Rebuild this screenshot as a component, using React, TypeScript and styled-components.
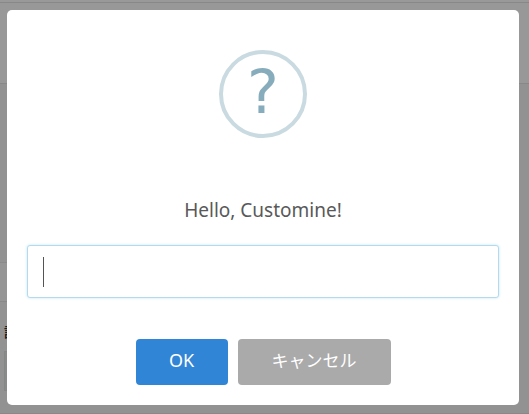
import React, { useState } from "react";
import styled, { createGlobalStyle } from "styled-components";

const GlobalStyle = createGlobalStyle`
  * { box-sizing: border-box; }
  html, body, #root { height: 100%; }
  body {
    margin: 0;
    overflow: hidden;
    background: #f3f3f3;
    font-family: "Noto Sans", "Noto Sans CJK JP", sans-serif;
  }
`;

const Page = styled.div`
  display: flex;
  flex-direction: column;
  min-height: 100%;
`;

const TopBar = styled.div`
  height: 3px;
  background: #ffffff;
  border-bottom: 1px solid #e3e3e3;
`;

const Header = styled.div`
  height: 81px;
  background: #fdfdfd;
  border-bottom: 1px solid #e3e3e3;
`;

const Spacer = styled.div`
  height: 178px;
`;

const Toolbar = styled.div`
  width: 80%;
  height: 40px;
  background: #f9f9f9;
  border-top: 1px solid #e6e6e6;
  border-bottom: 1px solid #e3e3e3;
`;

const Record = styled.div`
  display: flex;
  flex-direction: column;
  flex: 1;
  padding: 20px 4px 0;
  border-bottom: 1px solid #e3e3e3;
`;

const FieldLabel = styled.div`
  height: 29px;
  font-size: 13px;
  line-height: 20px;
  font-weight: 700;
  color: #333333;
`;

const FieldValue = styled.div`
  width: 160px;
  height: 40px;
  background: #e4e7e7;
  border: 1px solid #dedfdf;
`;

const Overlay = styled.div`
  position: fixed;
  inset: 0;
  display: flex;
  align-items: center;
  padding: 10px 10px 9px 7px;
  background: rgba(0, 0, 0, 0.4);
`;

const Dialog = styled.form`
  display: flex;
  flex-direction: column;
  align-items: center;
  width: 100%;
  padding: 40px 20px 20px;
  border-radius: 5px;
  background: #ffffff;
`;

const QuestionIcon = styled.div`
  display: flex;
  justify-content: center;
  width: 88px;
  height: 88px;
  border: 4px solid #c9dae1;
  border-radius: 50%;
  color: #87adbd;
  font-family: "DejaVu Sans", sans-serif;
  font-size: 60px;
  line-height: 76px;
`;

const Message = styled.label`
  margin-top: 59px;
  font-size: 19px;
  line-height: 26px;
  color: #595959;
`;

const InputWrap = styled.div`
  position: relative;
  width: 100%;
  margin-top: 22px;
`;

const TextInput = styled.input`
  display: block;
  width: 100%;
  height: 53px;
  padding: 0 15px;
  border: 1px solid #b4dbed;
  border-radius: 3px;
  outline: none;
  box-shadow: 0 0 3px #c4e6f5;
  background: #ffffff;
  color: #545454;
  font: inherit;
  font-size: 20px;
  caret-color: transparent;
`;

const Caret = styled.span`
  position: absolute;
  top: 12px;
  left: 16px;
  width: 1px;
  height: 30px;
  background: #545454;
  pointer-events: none;
`;

const Actions = styled.div`
  display: flex;
  gap: 10px;
  margin-top: 41px;
`;

const Button = styled.button<{ $tone: "confirm" | "cancel" }>`
  min-width: 92px;
  height: 46px;
  padding: ${({ $tone }) => ($tone === "confirm" ? "0 33px 4px" : "0 34px 2px")};
  border: 0;
  border-radius: 4px;
  background: ${({ $tone }) => ($tone === "confirm" ? "#3085d6" : "#aaaaaa")};
  color: #ffffff;
  font: inherit;
  font-size: ${({ $tone }) => ($tone === "confirm" ? "18px" : "17px")};
  line-height: 26px;
`;

export default function App() {
  const [value, setValue] = useState("");

  return (
    <>
      <GlobalStyle />
      <Page>
        <TopBar />
        <Header />
        <Spacer />
        <Toolbar />
        <Record>
          <FieldLabel>記</FieldLabel>
          <FieldValue />
        </Record>
      </Page>
      <Overlay>
        <Dialog role="dialog" aria-modal="true" onSubmit={(e) => e.preventDefault()}>
          <QuestionIcon>?</QuestionIcon>
          <Message htmlFor="answer">Hello, Customine!</Message>
          <InputWrap>
            <TextInput
              id="answer"
              type="text"
              value={value}
              onChange={(e) => setValue(e.target.value)}
            />
            {value === "" && <Caret />}
          </InputWrap>
          <Actions>
            <Button type="submit" $tone="confirm">OK</Button>
            <Button type="button" $tone="cancel">キャンセル</Button>
          </Actions>
        </Dialog>
      </Overlay>
    </>
  );
}
